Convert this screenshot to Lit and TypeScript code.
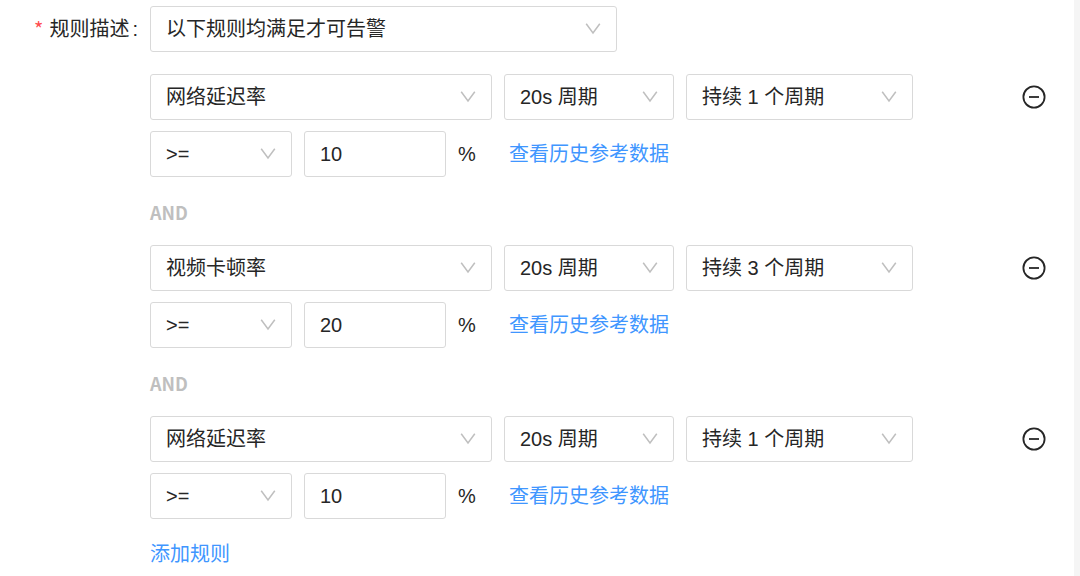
import { LitElement, html, css, svg } from "lit";
import { customElement, property, state } from "lit/decorators.js";

interface Rule {
  metric: string;
  period: string;
  duration: string;
  operator: string;
  threshold: number;
}

@customElement("select-box")
class SelectBox extends LitElement {
  @property() label = "";
  @property() value = "";

  static styles = css`
    :host {
      display: grid;
      min-width: 0;
    }
    .field,
    .arrow {
      grid-area: 1 / 1;
    }
    .field {
      box-sizing: border-box;
      width: 100%;
      height: 46px;
      margin: 0;
      padding: 0 44px 0 15px;
      border: 1px solid #d9d9d9;
      border-radius: 3px;
      background: #fff;
      color: #262626;
      font: inherit;
      appearance: none;
    }
    .field:focus {
      outline: none;
      border-color: #4096ff;
    }
    .arrow {
      align-self: center;
      justify-self: end;
      width: 16px;
      height: 12px;
      margin-right: 16px;
      pointer-events: none;
    }
  `;

  render() {
    return html`
      <select class="field" aria-label=${this.label}>
        <option selected>${this.value}</option>
      </select>
      <svg class="arrow" viewBox="0 0 16 12" aria-hidden="true">
        <path d="M1.2 .8L8 10L14.8 .8" fill="none" stroke="#bfbfbf" stroke-width="1.5" />
      </svg>
    `;
  }
}

@customElement("app-root")
class AppRoot extends LitElement {
  @state() private rules: Rule[] = [
    { metric: "网络延迟率", period: "20s 周期", duration: "持续 1 个周期", operator: ">=", threshold: 10 },
    { metric: "视频卡顿率", period: "20s 周期", duration: "持续 3 个周期", operator: ">=", threshold: 20 },
    { metric: "网络延迟率", period: "20s 周期", duration: "持续 1 个周期", operator: ">=", threshold: 10 },
  ];

  static styles = css`
    :host {
      display: block;
      box-sizing: border-box;
      min-height: 100vh;
      border-right: 6px solid #f5f5f5;
      background: #fff;
      color: #262626;
      font: 20px/30px "Liberation Sans", "Noto Sans CJK SC", sans-serif;
    }
    .form {
      display: grid;
      grid-template-columns: 138px minmax(0, 1fr);
      column-gap: 12px;
      padding: 6px 28px 0 0;
    }
    .label {
      display: flex;
      justify-content: flex-end;
      line-height: 46px;
    }
    .required {
      margin-right: 6px;
      color: #ff4d4f;
      font-family: "Noto Sans CJK SC", sans-serif;
    }
    .colon {
      margin-left: 3px;
    }
    .mode {
      width: 61%;
      max-width: 467px;
    }
    .rules {
      display: flex;
      flex-direction: column;
      margin-top: 22px;
    }
    .rule {
      display: grid;
      grid-template-columns: minmax(0, 763px) auto;
      justify-content: space-between;
    }
    .lines {
      display: grid;
      gap: 11px;
    }
    .line {
      display: grid;
      gap: 12px;
      align-items: center;
    }
    .scope {
      grid-template-columns: 342fr 170fr 227fr;
    }
    .limit {
      grid-template-columns: 142px 142px 39px auto;
      justify-content: start;
    }
    .number {
      box-sizing: border-box;
      width: 100%;
      height: 46px;
      margin: 0;
      padding: 0 15px;
      border: 1px solid #d9d9d9;
      border-radius: 3px;
      color: inherit;
      font: inherit;
    }
    .link {
      color: #4096ff;
      text-decoration: none;
    }
    .remove {
      display: flex;
      align-items: center;
      height: 46px;
      padding: 0;
      border: 0;
      background: none;
      color: #262626;
      cursor: pointer;
    }
    .minus {
      width: 24px;
      height: 24px;
    }
    .and {
      padding: 20px 0 18px;
      color: #bfbfbf;
      font: bold 18px/30px "Noto Sans CJK SC", sans-serif;
    }
    .add {
      align-self: flex-start;
      margin-top: 20px;
      padding: 0;
      border: 0;
      background: none;
      color: #4096ff;
      font: inherit;
      cursor: pointer;
    }
  `;

  private add() {
    this.rules = [...this.rules, { ...this.rules[0] }];
  }

  private remove(index: number) {
    this.rules = this.rules.filter((_, i) => i !== index);
  }

  private renderRule(rule: Rule, index: number) {
    return html`
      ${index > 0 ? html`<div class="and">AND</div>` : ""}
      <div class="rule">
        <div class="lines">
          <div class="line scope">
            <select-box label="指标" .value=${rule.metric}></select-box>
            <select-box label="周期" .value=${rule.period}></select-box>
            <select-box label="持续" .value=${rule.duration}></select-box>
          </div>
          <div class="line limit">
            <select-box label="条件" .value=${rule.operator}></select-box>
            <input class="number" id="limit-${index}" aria-label="阈值" .value=${String(rule.threshold)} />
            <label for="limit-${index}">%</label>
            <a class="link" href="#history">查看历史参考数据</a>
          </div>
        </div>
        <button class="remove" type="button" aria-label="删除" @click=${() => this.remove(index)}>
          <svg class="minus" viewBox="0 0 24 24" fill="none" stroke="currentColor" stroke-width="1.8" aria-hidden="true">
            ${svg`<circle cx="12" cy="12" r="10.6" /><path d="M7 12H17" />`}
          </svg>
        </button>
      </div>
    `;
  }

  render() {
    return html`
      <form class="form" @submit=${(e: Event) => e.preventDefault()}>
        <div class="label"><span class="required">*</span><span>规则描述</span><span class="colon">:</span></div>
        <div>
          <select-box class="mode" label="规则描述" value="以下规则均满足才可告警"></select-box>
          <div class="rules">
            ${this.rules.map((rule, i) => this.renderRule(rule, i))}
            <button class="add" type="button" @click=${this.add}>添加规则</button>
          </div>
        </div>
      </form>
    `;
  }
}
